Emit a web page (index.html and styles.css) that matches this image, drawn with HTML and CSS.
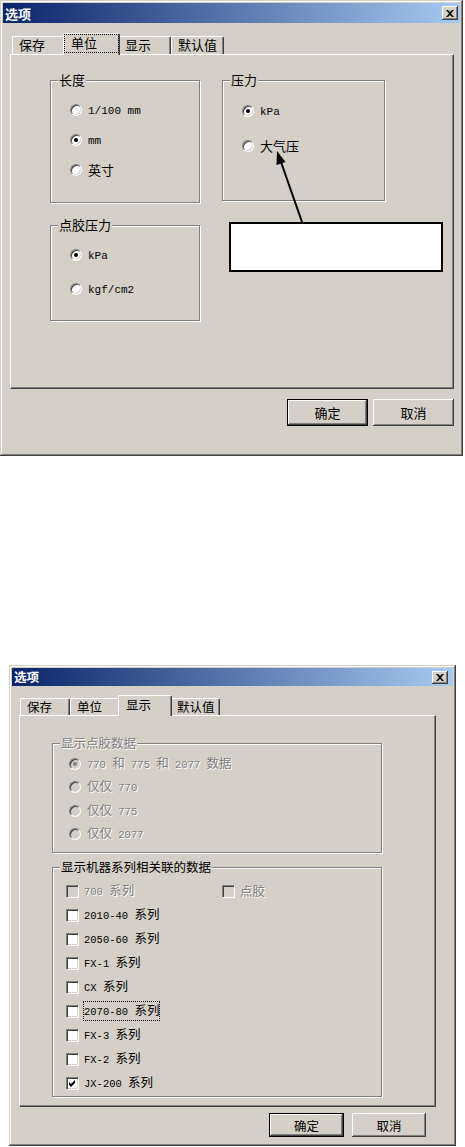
FILE: index.html
```html
<!DOCTYPE html>
<html>
<head>
    <meta charset="utf-8">
    <title>选项</title>
    <link rel="stylesheet" href="styles.css">
</head>
<body>
    <!-- 单位 page -->
    <div class="dlg dlg-a">
        <div class="titlebar">
            <span class="title">选项</span>
            <span class="close">
                <svg width="8" height="7" viewBox="0 0 8 7"><path d="M0 0H2L4 2L6 0H8L5 3.5L8 7H6L4 5L2 7H0L3 3.5Z" fill="#000"/></svg>
            </span>
        </div>
        <div class="tabs">
            <div class="tab">保存</div>
            <div class="tab active"><span class="focus">单位</span></div>
            <div class="tab">显示</div>
            <div class="tab">默认值</div>
        </div>
        <div class="panel">
            <div class="row">
                <div class="group g-len">
                    <div class="legend">长度</div>
                    <div class="opts">
                        <div class="opt"><span class="radio"></span><span class="txt"><span class="en">1/100 mm</span></span></div>
                        <div class="opt"><span class="radio on"></span><span class="txt"><span class="en">mm</span></span></div>
                        <div class="opt"><span class="radio"></span><span class="txt">英寸</span></div>
                    </div>
                </div>
                <div class="group g-pres">
                    <div class="legend">压力</div>
                    <div class="opts">
                        <div class="opt"><span class="radio on"></span><span class="txt"><span class="en">kPa</span></span></div>
                        <div class="opt"><span class="radio"></span><span class="txt">大气压</span></div>
                    </div>
                </div>
            </div>
            <div class="group g-glue">
                <div class="legend">点胶压力</div>
                <div class="opts">
                    <div class="opt"><span class="radio on"></span><span class="txt"><span class="en">kPa</span></span></div>
                    <div class="opt"><span class="radio"></span><span class="txt"><span class="en">kgf/cm2</span></span></div>
                </div>
            </div>
        </div>
        <div class="btns">
            <div class="btn default">确定</div>
            <div class="btn">取消</div>
        </div>

        <!-- annotation on top of the dialog -->
        <svg class="arrow" width="463" height="456">
            <line x1="302" y1="222" x2="281" y2="162" stroke="#000" stroke-width="2"/>
            <polygon points="277,151 285.5,162 276.5,165" fill="#000"/>
        </svg>
        <div class="callout"></div>
    </div>

    <!-- 显示 page -->
    <div class="dlg dlg-b">
        <div class="titlebar">
            <span class="title">选项</span>
            <span class="close">
                <svg width="8" height="7" viewBox="0 0 8 7"><path d="M0 0H2L4 2L6 0H8L5 3.5L8 7H6L4 5L2 7H0L3 3.5Z" fill="#000"/></svg>
            </span>
        </div>
        <div class="tabs">
            <div class="tab">保存</div>
            <div class="tab">单位</div>
            <div class="tab active"><span class="focus none">显示</span></div>
            <div class="tab">默认值</div>
        </div>
        <div class="panel">
            <div class="group g-disp off">
                <div class="legend">显示点胶数据</div>
                <div class="opts">
                    <div class="opt"><span class="radio on"></span><span class="txt"><span class="en">770 </span>和<span class="en"> 775 </span>和<span class="en"> 2077 </span>数据</span></div>
                    <div class="opt"><span class="radio"></span><span class="txt">仅仅<span class="en"> 770</span></span></div>
                    <div class="opt"><span class="radio"></span><span class="txt">仅仅<span class="en"> 775</span></span></div>
                    <div class="opt"><span class="radio"></span><span class="txt">仅仅<span class="en"> 2077</span></span></div>
                </div>
            </div>
            <div class="group g-series">
                <div class="legend">显示机器系列相关联的数据</div>
                <div class="opts">
                    <div class="opt">
                        <span class="item off"><span class="check"></span><span class="txt"><span class="en">700 </span>系列</span></span>
                        <span class="item off"><span class="check"></span><span class="txt">点胶</span></span>
                    </div>
                    <div class="opt"><span class="check"></span><span class="txt"><span class="en">2010-40 </span>系列</span></div>
                    <div class="opt"><span class="check"></span><span class="txt"><span class="en">2050-60 </span>系列</span></div>
                    <div class="opt"><span class="check"></span><span class="txt"><span class="en">FX-1 </span>系列</span></div>
                    <div class="opt"><span class="check"></span><span class="txt"><span class="en">CX </span>系列</span></div>
                    <div class="opt"><span class="check"></span><span class="txt dotted"><span class="en">2070-80 </span>系列</span></div>
                    <div class="opt"><span class="check"></span><span class="txt"><span class="en">FX-3 </span>系列</span></div>
                    <div class="opt"><span class="check"></span><span class="txt"><span class="en">FX-2 </span>系列</span></div>
                    <div class="opt"><span class="check"><svg width="7" height="7" viewBox="0 0 7 7"><path d="M0 2L2 4L6 0V3L2 7L0 5Z" fill="#000"/></svg></span><span class="txt"><span class="en">JX-200 </span>系列</span></div>
                </div>
            </div>
        </div>
        <div class="btns">
            <div class="btn default">确定</div>
            <div class="btn">取消</div>
        </div>
    </div>
</body>
</html>
```

FILE: styles.css
```css
body {
    margin: 0;
    font-family: "Noto Sans CJK SC", sans-serif;
    font-size: 13px;
    color: #000;
    background-color: #fff;
}

/* window frame */
.dlg {
    position: relative;
    box-sizing: border-box;
    padding: 3px;
    background-color: #d4d0c8;
    box-shadow: inset -1px -1px #404040, inset 1px 1px #d4d0c8, inset -2px -2px #808080, inset 2px 2px #fff;
}

.dlg-a {
    width: 463px;
    height: 456px;
}

.dlg-b {
    width: 447px;
    height: 481px;
    margin: 209px 0 0 9px;
    font-size: 12.5px;
}

.titlebar {
    display: flex;
    align-items: center;
    justify-content: space-between;
    height: 20px;
    padding: 0 2px;
    background: linear-gradient(to right, #0a246a, #a6caf0);
}

.dlg-b .titlebar {
    height: 18px;
    padding-right: 5px;
}

.title {
    color: #fff;
    font-weight: bold;
    line-height: 1;
}

.close {
    display: flex;
    align-items: center;
    justify-content: center;
    box-sizing: border-box;
    width: 16px;
    height: 14px;
    background-color: #d4d0c8;
    box-shadow: inset -1px -1px #404040, inset 1px 1px #fff, inset -2px -2px #808080;
}

.dlg-b .close {
    height: 13px;
}

/* tabs */
.tabs {
    display: flex;
    align-items: flex-end;
    height: 21px;
    margin: 10px 0 0 9px;
}

.dlg-b .tabs {
    height: 20px;
    margin: 9px 0 0 8px;
}

.tab {
    box-sizing: border-box;
    width: 53px;
    height: 18px;
    padding-left: 6px;
    line-height: 16px;
    border-top: 1px solid #fff;
    border-left: 1px solid #fff;
    border-right: 1px solid #404040;
    border-radius: 2px 2px 0 0;
    box-shadow: inset -1px 0 #808080;
}

.dlg-b .tab {
    width: 50px;
    height: 17px;
    line-height: 15px;
}

.tab.active {
    position: relative;
    z-index: 1;
    width: 57px;
    height: 22px;
    margin: 0 -2px -1px;
    padding: 1px 1px 0 1px;
    background-color: #d4d0c8;
}

.dlg-b .tab.active {
    width: 54px;
    height: 21px;
}

.focus {
    display: block;
    height: 17px;
    padding-left: 6px;
    line-height: 16px;
    outline: 1px dotted #000;
}

.focus.none {
    outline: none;
}

/* tab page */
.panel {
    box-sizing: border-box;
    width: 444px;
    height: 335px;
    margin-left: 7px;
    padding: 25px 0 0 39px;
    border-top: 1px solid #fff;
    border-left: 1px solid #fff;
    border-right: 1px solid #404040;
    border-bottom: 1px solid #404040;
    box-shadow: inset -1px -1px #808080;
}

.dlg-b .panel {
    width: 417px;
    height: 392px;
    padding: 27px 0 0 32px;
}

.row {
    display: flex;
    gap: 22px;
}

/* group boxes */
.group {
    box-sizing: border-box;
    padding-left: 19px;
    border: 1px solid #808080;
    box-shadow: inset 1px 1px #fff, 1px 1px #fff;
}

.legend {
    width: fit-content;
    height: 16px;
    margin: -9px 0 0 -12px;
    padding: 0 1px;
    line-height: 16px;
    background-color: #d4d0c8;
}

.opt {
    display: flex;
    align-items: center;
    gap: 6px;
    white-space: nowrap;
}

.txt {
    line-height: 16px;
    white-space: pre;
}

.en {
    font-family: "Liberation Mono", monospace;
    font-size: 11px;
}

.dlg-b .en {
    font-size: 10.5px;
}

.g-len {
    width: 150px;
    height: 123px;
}

.g-len .opts {
    padding-top: 7px;
}

.g-len .opt {
    height: 30px;
}

.g-pres {
    width: 163px;
    height: 121px;
}

.g-pres .opts {
    padding-top: 5px;
}

.g-pres .opt {
    height: 35px;
}

.g-glue {
    width: 150px;
    height: 96px;
    margin-top: 22px;
}

.g-glue .opts {
    padding-top: 5px;
}

.g-glue .opt {
    height: 34px;
}

.g-disp {
    width: 330px;
    height: 110px;
    padding-left: 16px;
}

.g-disp .legend {
    margin-left: -9px;
}

.g-disp .opts {
    padding-top: 1px;
}

.g-disp .opt {
    height: 23.5px;
}

.g-series {
    width: 330px;
    height: 230px;
    margin-top: 14px;
    padding-left: 13px;
}

.g-series .legend {
    margin-left: -6px;
}

.g-series .opts {
    padding-top: 4px;
}

.g-series .opt {
    height: 24px;
    gap: 5px;
}

.item {
    display: flex;
    align-items: center;
    gap: 5px;
    width: 151px;
}

.dotted {
    outline: 1px dotted #000;
}

/* disabled */
.off,
.off .legend {
    color: #808080;
    text-shadow: 1px 1px #fff;
}

/* radio buttons */
.radio {
    display: flex;
    align-items: center;
    justify-content: center;
    box-sizing: border-box;
    width: 12px;
    height: 12px;
    flex: none;
    border: 1px solid;
    border-color: #808080 #fff #fff #808080;
    border-radius: 50%;
    background-color: #fff;
    box-shadow: inset 1px 1px #404040, inset -1px -1px #d4d0c8;
}

.radio.on::after {
    content: "";
    width: 4px;
    height: 4px;
    border-radius: 50%;
    background-color: #000;
}

.off .radio {
    background-color: #d4d0c8;
}

.off .radio.on::after {
    background-color: #808080;
}

/* check boxes */
.check {
    display: flex;
    align-items: center;
    justify-content: center;
    box-sizing: border-box;
    width: 13px;
    height: 13px;
    flex: none;
    border: 1px solid;
    border-color: #808080 #fff #fff #808080;
    background-color: #fff;
    box-shadow: inset 1px 1px #404040, inset -1px -1px #d4d0c8;
}

.off .check {
    background-color: #d4d0c8;
}

/* buttons */
.btns {
    display: flex;
    justify-content: flex-end;
    gap: 5px;
    width: 444px;
    margin: 10px 0 0 7px;
}

.dlg-b .btns {
    gap: 8px;
    width: 407px;
    margin-top: 6px;
}

.btn {
    display: flex;
    align-items: center;
    justify-content: center;
    box-sizing: border-box;
    width: 81px;
    height: 27px;
    background-color: #d4d0c8;
    box-shadow: inset -1px -1px #404040, inset 1px 1px #fff, inset -2px -2px #808080;
}

.btn.default {
    border: 1px solid #000;
}

.dlg-b .btn {
    width: 75px;
    height: 24px;
}

.dlg-b .btn + .btn {
    width: 74px;
}

/* annotation */
.arrow {
    position: absolute;
    top: 0;
    left: 0;
    pointer-events: none;
}

.callout {
    position: absolute;
    top: 222px;
    left: 229px;
    box-sizing: border-box;
    width: 214px;
    height: 50px;
    border: 2px solid #000;
    background-color: #fff;
}
```
